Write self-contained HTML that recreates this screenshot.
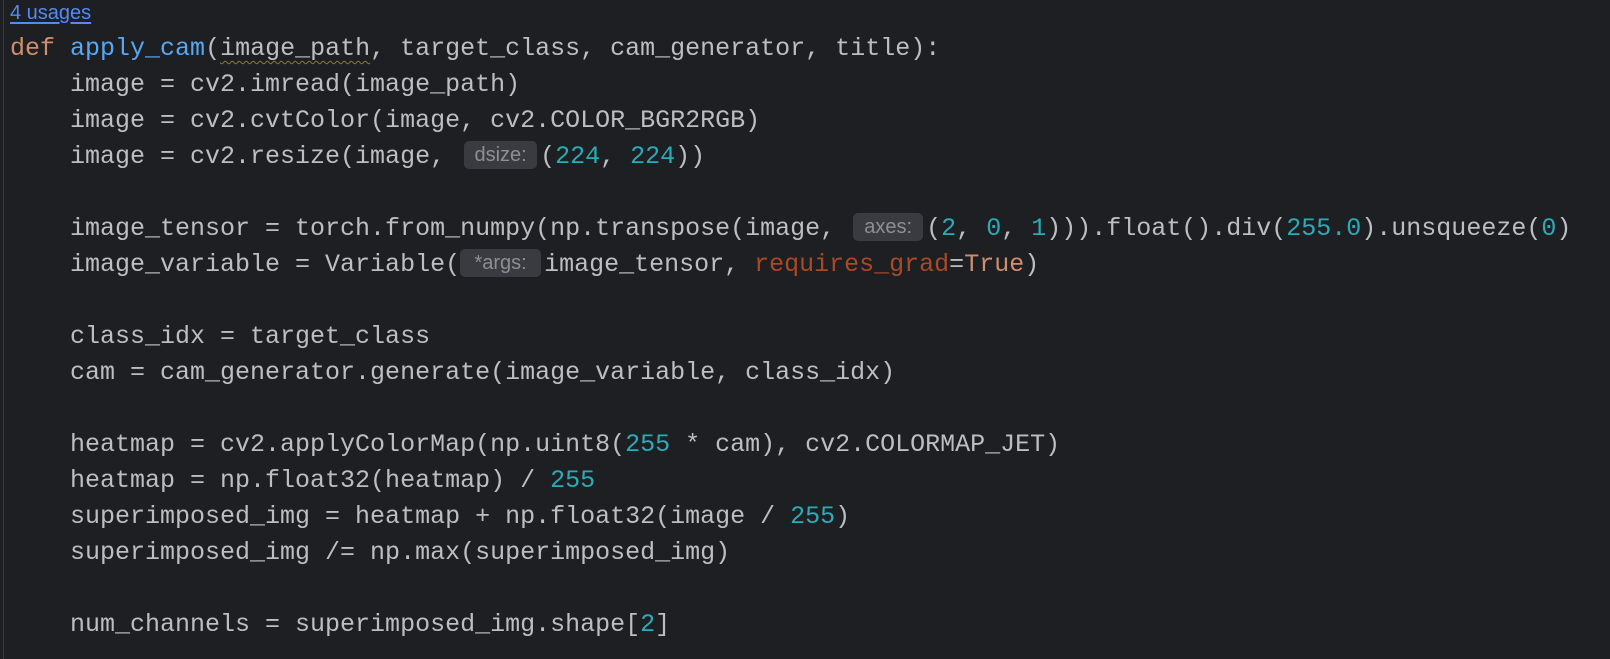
<!DOCTYPE html>
<html><head><meta charset="utf-8"><style>
html,body{margin:0;padding:0;}
body{width:1610px;height:659px;background:#1e1f22;overflow:hidden;position:relative;color:#bcbec4;}
.gut{position:absolute;left:3px;top:0;width:1px;height:659px;background:#393b40;}
.us{position:absolute;left:10px;top:2px;font-family:"Liberation Sans",sans-serif;font-size:20px;color:#548af7;text-decoration:underline;text-underline-offset:3px;}
.code{position:absolute;left:10px;top:31px;font-family:"Liberation Mono",monospace;font-size:25px;}
.code div{height:36px;line-height:35px;white-space:pre;}
.k{color:#cf8e6d}.f{color:#56a8f5}.n{color:#2aacb8}.p{color:#aa4926}
.w{text-decoration:underline wavy #8a7a3a;text-underline-offset:5px;text-decoration-thickness:1px}
.h{display:inline-block;box-sizing:border-box;text-align:center;font-family:"Liberation Sans",sans-serif;font-size:20px;line-height:28px;height:28px;color:#8c8f95;background:#393b40;border-radius:5px;margin:0 3px 0 4px;vertical-align:2px;}
</style></head><body>
<div class="gut"></div>
<div class="us">4 usages</div>
<div class="code">
<div><span class="k">def</span> <span class="f">apply_cam</span>(<span class="w">image_path</span>, target_class, cam_generator, title):</div>
<div>    image = cv2.imread(image_path)</div>
<div>    image = cv2.cvtColor(image, cv2.COLOR_BGR2RGB)</div>
<div>    image = cv2.resize(image, <span class="h" style="width:73px">dsize:</span>(<span class="n">224</span>, <span class="n">224</span>))</div>
<div> </div>
<div>    image_tensor = torch.from_numpy(np.transpose(image, <span class="h" style="width:70px;margin-left:3px">axes:</span>(<span class="n">2</span>, <span class="n">0</span>, <span class="n">1</span>))).float().div(<span class="n">255.0</span>).unsqueeze(<span class="n">0</span>)</div>
<div>    image_variable = Variable(<span class="h" style="width:81px;margin-left:0">*args:</span>image_tensor, <span class="p">requires_grad</span>=<span class="k">True</span>)</div>
<div> </div>
<div>    class_idx = target_class</div>
<div>    cam = cam_generator.generate(image_variable, class_idx)</div>
<div> </div>
<div>    heatmap = cv2.applyColorMap(np.uint8(<span class="n">255</span> * cam), cv2.COLORMAP_JET)</div>
<div>    heatmap = np.float32(heatmap) / <span class="n">255</span></div>
<div>    superimposed_img = heatmap + np.float32(image / <span class="n">255</span>)</div>
<div>    superimposed_img /= np.max(superimposed_img)</div>
<div> </div>
<div>    num_channels = superimposed_img.shape[<span class="n">2</span>]</div>
</div>
</body></html>
